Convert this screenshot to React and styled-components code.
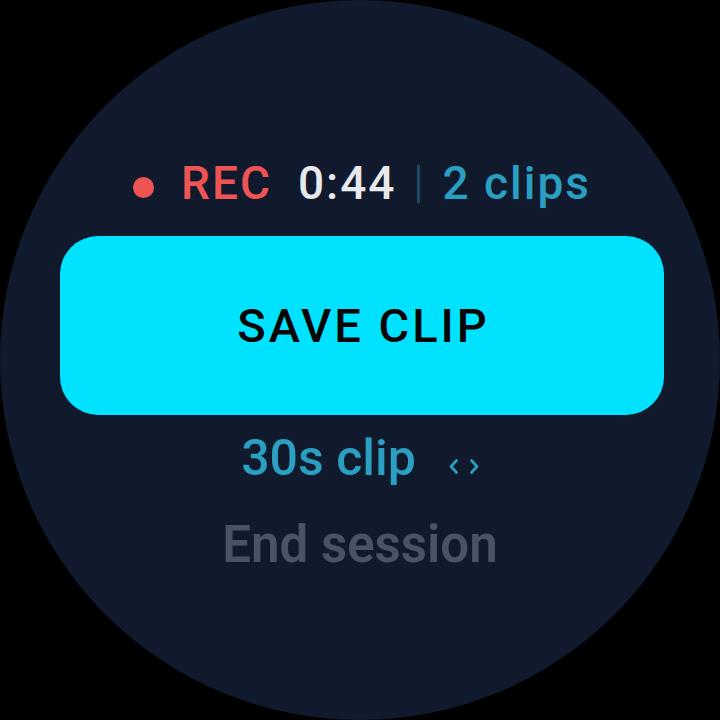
import React from 'react'
import styled, { createGlobalStyle } from 'styled-components'

const GlobalStyle = createGlobalStyle`
  html, body {
    margin: 0;
    padding: 0;
    background: #000;
  }
  body {
    font-family: Roboto, "Liberation Sans", sans-serif;
  }
`

const Watch = styled.div`
  width: 720px;
  height: 720px;
  border-radius: 50%;
  background: #111a2c;
  overflow: hidden;
  display: flex;
  flex-direction: column;
  align-items: center;
  padding-top: 160px;
  box-sizing: border-box;
`

const StatusRow = styled.div`
  display: flex;
  align-items: center;
  height: 46px;
  font-size: 46px;
  line-height: 1;
  font-weight: 500;
  margin-left: 4px;
`

const RecDot = styled.span`
  width: 21px;
  height: 21px;
  border-radius: 50%;
  background: #ef5454;
  margin-right: 27px;
  margin-top: 8px;
`

const Label = styled.span`
  color: ${(p) => p.color};
  margin-right: ${(p) => p.gap || 0}px;
  letter-spacing: 2px;
`

const Divider = styled.span`
  width: 3px;
  height: 38px;
  background: #1b4863;
  margin: 2px 22px 0 21px;
`

const SaveButton = styled.button`
  width: 604px;
  height: 179px;
  margin-top: 30px;
  margin-left: 4px;
  border: none;
  border-radius: 38px;
  background: #00e2ff;
  color: #050505;
  font-family: Roboto, "Liberation Sans", sans-serif;
  font-size: 47px;
  font-weight: 500;
  letter-spacing: 3px;
  text-indent: 3px;
  line-height: 1;
  padding: 0;
  cursor: pointer;
`

const DurationRow = styled.div`
  display: flex;
  align-items: center;
  margin-top: 18px;
  height: 50px;
  font-size: 50px;
  line-height: 1;
  font-weight: 500;
  color: #2a9fc1;
`

const Chevrons = styled.svg`
  margin-left: 33px;
  margin-top: 17px;
  color: #2a9fc1;
`

const EndSession = styled.div`
  margin-top: 36px;
  height: 51px;
  font-size: 51px;
  line-height: 1;
  font-weight: 600;
  color: #4a5264;
`

export default function App() {
  return (
    <>
      <GlobalStyle />
      <Watch>
        <StatusRow>
          <RecDot />
          <Label color="#ef5454" gap={26}>REC</Label>
          <Label color="#e6e8ec">0:44</Label>
          <Divider />
          <Label color="#2a9fc1">2 clips</Label>
        </StatusRow>
        <SaveButton>SAVE CLIP</SaveButton>
        <DurationRow>
          30s clip
          <Chevrons width="30" height="15" viewBox="0 0 30 15" fill="none">
            <polyline points="7.5,1.5 2,7.5 7.5,13.5" stroke="currentColor" strokeWidth="2.6" strokeLinecap="round" strokeLinejoin="round" />
            <polyline points="22.5,1.5 28,7.5 22.5,13.5" stroke="currentColor" strokeWidth="2.6" strokeLinecap="round" strokeLinejoin="round" />
          </Chevrons>
        </DurationRow>
        <EndSession>End session</EndSession>
      </Watch>
    </>
  )
}
